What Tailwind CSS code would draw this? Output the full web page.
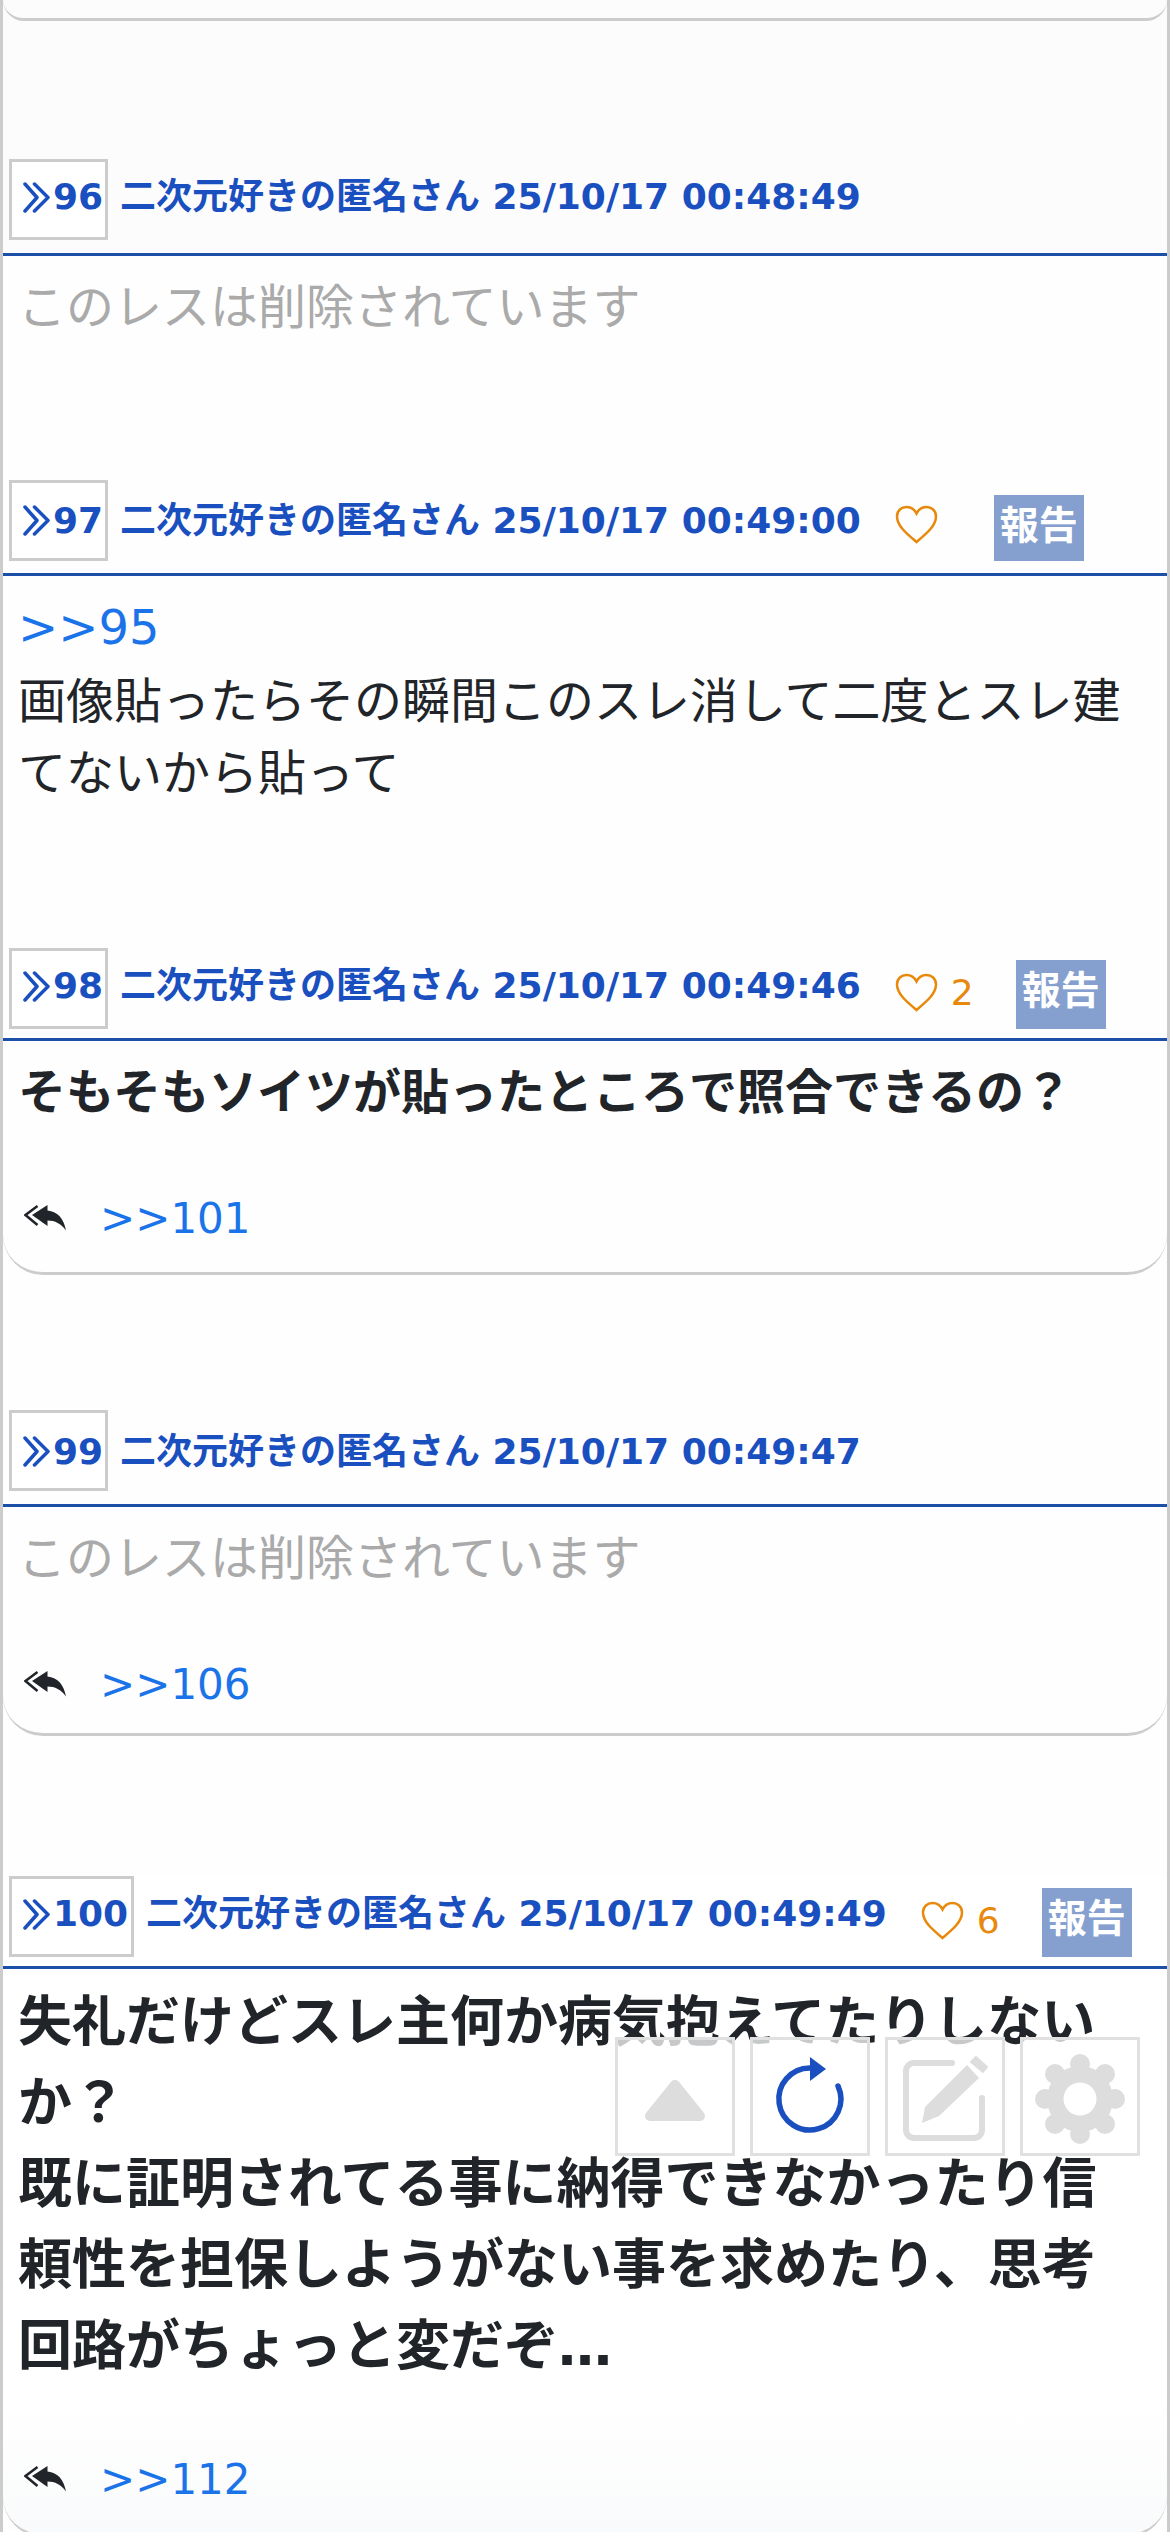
<!DOCTYPE html>
<html lang="ja">
<head>
  <meta charset="UTF-8" />
  <meta name="viewport" content="width=device-width, initial-scale=1" />
  <title>二次元好きの匿名さん</title>
  <script src="https://cdn.jsdelivr.net/npm/@tailwindcss/browser@4"></script>
</head>
<body class="bg-white">
  <div class="relative w-[1170px] h-[2532px] overflow-hidden border-x-[3px] border-[#ccc] bg-[#fefefe] text-[#212529] font-['DejaVu_Sans','Noto_Sans_CJK_JP',sans-serif]">

    <!-- end of previous post + 96 -->
    <div class="bg-[#fcfcfd]">
      <div class="h-[21px] border-b-[3px] border-[#ccc] rounded-b-[40px]"></div>
      <div class="flex items-center mt-[138px] pl-[6px] pb-[13px] border-b-[3px] border-[#1c4fa8] whitespace-nowrap text-[36px] font-bold text-[#1a4fc0]">
        <span class="flex items-center h-[81px] w-[99px] pl-[11px] pb-[5px] border-[3px] border-[#ccc] bg-white">
          <svg class="w-[27px] h-[31px] mr-[3px]" viewBox="0 0 27 31" fill="none" stroke="#1a4fc0" stroke-width="3.500" stroke-linecap="round" stroke-linejoin="round"><path d="M2 2 14 15.500 2 29"/><path d="M11.500 2 25 15.500 11.500 29"/></svg>96</span>
        <span class="ml-[12px] mb-[5px]">二次元好きの匿名さん 25/10/17 00:48:49</span>
      </div>
    </div>
    <p class="pl-[15px] pr-[30px] pt-[15px] text-[48px] leading-[72px] text-[#aaa]">このレスは削除されています</p>

    <!-- 97 -->
    <div class="mt-[137px]">
      <div class="flex items-center pl-[6px] pb-[12px] border-b-[3px] border-[#1c4fa8] whitespace-nowrap text-[36px] font-bold text-[#1a4fc0]">
        <span class="flex items-center h-[81px] w-[99px] pl-[11px] border-[3px] border-[#ccc] bg-white">
          <svg class="w-[27px] h-[31px] mr-[3px]" viewBox="0 0 27 31" fill="none" stroke="#1a4fc0" stroke-width="3.500" stroke-linecap="round" stroke-linejoin="round"><path d="M2 2 14 15.500 2 29"/><path d="M11.500 2 25 15.500 11.500 29"/></svg>97</span>
        <span class="ml-[12px]">二次元好きの匿名さん 25/10/17 00:49:00</span>
        <svg class="ml-[34px] mt-[8px] w-[43px] h-[39px]" viewBox="0 0 43 39" fill="none" stroke="#e8890c" stroke-width="2.5"><path d="M21.5 37C12 29 2 21 2 11.5 2 5.5 6.5 2 11.5 2c4 0 8 2.500 10 6.500C23.500 4.500 27.500 2 31.500 2 36.500 2 41 5.500 41 11.500 41 21 31 29 21.500 37Z"/></svg>
        <span class="self-end ml-[56px] px-[6px] h-[66px] leading-[62px] text-[39px] bg-[#85a0cf] text-white">報告</span>
      </div>
      <div class="pl-[15px] pr-[30px] pt-[15px] text-[48px] leading-[72px]">
        <a class="block text-[#1a73e8]">&gt;&gt;95</a>
        <p class="mt-[2px]">画像貼ったらその瞬間このスレ消して二度とスレ建てないから貼って</p>
      </div>
    </div>

    <!-- 98 -->
    <div class="mt-[139px] border-b-[3px] border-[#ccc] rounded-b-[40px] pb-[24px]">
      <div class="flex items-center pl-[6px] pb-[9px] border-b-[3px] border-[#1c4fa8] whitespace-nowrap text-[36px] font-bold text-[#1a4fc0]">
        <span class="flex items-center h-[81px] w-[99px] pl-[11px] pb-[5px] border-[3px] border-[#ccc] bg-white">
          <svg class="w-[27px] h-[31px] mr-[3px]" viewBox="0 0 27 31" fill="none" stroke="#1a4fc0" stroke-width="3.500" stroke-linecap="round" stroke-linejoin="round"><path d="M2 2 14 15.500 2 29"/><path d="M11.500 2 25 15.500 11.500 29"/></svg>98</span>
        <span class="ml-[12px] mb-[5px]">二次元好きの匿名さん 25/10/17 00:49:46</span>
        <svg class="ml-[34px] mt-[8px] w-[43px] h-[39px]" viewBox="0 0 43 39" fill="none" stroke="#e8890c" stroke-width="2.5"><path d="M21.5 37C12 29 2 21 2 11.5 2 5.5 6.5 2 11.5 2c4 0 8 2.500 10 6.500C23.500 4.500 27.500 2 31.500 2 36.500 2 41 5.500 41 11.500 41 21 31 29 21.500 37Z"/></svg>
        <span class="ml-[13px] mt-[8px] font-normal text-[#e8890c]">2</span>
        <span class="self-end ml-[42px] px-[6px] h-[69px] leading-[62px] text-[39px] bg-[#85a0cf] text-white">報告</span>
      </div>
      <p class="pl-[15px] pr-[30px] pt-[15px] text-[48px] leading-[72px] font-bold">そもそもソイツが貼ったところで照合できるの？</p>
      <div class="flex items-center h-[60px] mt-[60px] pl-[21px] text-[42px]">
        <svg class="w-[42px] h-[26px]" viewBox="0 0 42 26"><path d="M13.500 1 1.500 10l12 10" fill="none" stroke="#212529" stroke-width="2.500"/><path d="M8 10 23.500 0v5.500C34 6.500 40 14 42 25.500 37 18.500 31 15.500 23.500 15.500V21Z" fill="#212529"/></svg>
        <a class="ml-[34px] text-[#1a73e8]">&gt;&gt;101</a>
      </div>
    </div>

    <!-- 99 -->
    <div class="mt-[135px] border-b-[3px] border-[#ccc] rounded-b-[40px] pb-[19px]">
      <div class="flex items-center pl-[6px] pb-[13px] border-b-[3px] border-[#1c4fa8] whitespace-nowrap text-[36px] font-bold text-[#1a4fc0]">
        <span class="flex items-center h-[81px] w-[99px] pl-[11px] pt-[2px] border-[3px] border-[#ccc] bg-white">
          <svg class="w-[27px] h-[31px] mr-[3px]" viewBox="0 0 27 31" fill="none" stroke="#1a4fc0" stroke-width="3.500" stroke-linecap="round" stroke-linejoin="round"><path d="M2 2 14 15.500 2 29"/><path d="M11.500 2 25 15.500 11.500 29"/></svg>99</span>
        <span class="ml-[12px] mt-[2px]">二次元好きの匿名さん 25/10/17 00:49:47</span>
      </div>
      <p class="pl-[15px] pr-[30px] pt-[15px] text-[48px] leading-[72px] text-[#aaa]">このレスは削除されています</p>
      <div class="flex items-center h-[60px] mt-[60px] pl-[21px] text-[42px]">
        <svg class="w-[42px] h-[26px]" viewBox="0 0 42 26"><path d="M13.500 1 1.500 10l12 10" fill="none" stroke="#212529" stroke-width="2.500"/><path d="M8 10 23.500 0v5.500C34 6.500 40 14 42 25.500 37 18.500 31 15.500 23.500 15.500V21Z" fill="#212529"/></svg>
        <a class="ml-[34px] text-[#1a73e8]">&gt;&gt;106</a>
      </div>
    </div>

    <!-- 100 -->
    <div class="mt-[140px] border-b-[3px] border-[#ccc] rounded-b-[40px] pb-[25px] bg-linear-to-b from-white from-80% to-[#f9fafb]">
      <div class="flex items-center pl-[6px] pb-[9px] border-b-[3px] border-[#1c4fa8] whitespace-nowrap text-[36px] font-bold text-[#1a4fc0]">
        <span class="flex items-center h-[81px] w-[125px] pl-[11px] pb-[5px] border-[3px] border-[#ccc] bg-white">
          <svg class="w-[27px] h-[31px] mr-[3px]" viewBox="0 0 27 31" fill="none" stroke="#1a4fc0" stroke-width="3.500" stroke-linecap="round" stroke-linejoin="round"><path d="M2 2 14 15.500 2 29"/><path d="M11.500 2 25 15.500 11.500 29"/></svg>100</span>
        <span class="ml-[12px] mb-[5px]">二次元好きの匿名さん 25/10/17 00:49:49</span>
        <svg class="ml-[34px] mt-[8px] w-[43px] h-[39px]" viewBox="0 0 43 39" fill="none" stroke="#e8890c" stroke-width="2.5"><path d="M21.5 37C12 29 2 21 2 11.5 2 5.5 6.5 2 11.5 2c4 0 8 2.500 10 6.500C23.500 4.500 27.500 2 31.500 2 36.500 2 41 5.500 41 11.500 41 21 31 29 21.500 37Z"/></svg>
        <span class="ml-[13px] mt-[8px] font-normal text-[#e8890c]">6</span>
        <span class="self-end ml-[42px] px-[6px] h-[69px] leading-[62px] text-[39px] bg-[#85a0cf] text-white">報告</span>
      </div>
      <p class="pl-[15px] pr-[30px] pt-[13px] text-[54px] leading-[81px] font-bold">失礼だけどスレ主何か病気抱えてたりしないか？<br>既に証明されてる事に納得できなかったり信頼性を担保しようがない事を求めたり、思考回路がちょっと変だぞ…</p>
      <div class="flex items-center h-[60px] mt-[62px] pl-[21px] text-[42px]">
        <svg class="w-[42px] h-[26px]" viewBox="0 0 42 26"><path d="M13.500 1 1.500 10l12 10" fill="none" stroke="#212529" stroke-width="2.500"/><path d="M8 10 23.500 0v5.500C34 6.500 40 14 42 25.500 37 18.500 31 15.500 23.500 15.500V21Z" fill="#212529"/></svg>
        <a class="ml-[34px] text-[#1a73e8]">&gt;&gt;112</a>
      </div>
    </div>

    <!-- floating buttons -->
    <div class="absolute left-[612px] top-[2037px] flex gap-[15px]">
      <button class="w-[120px] h-[119px] border-[3px] border-[#e0e0e0] bg-white/75">
        <svg class="w-full h-full" viewBox="0 0 114 113"><path d="M57 45 82 76H32Z" fill="#ddd" stroke="#ddd" stroke-width="10" stroke-linejoin="round"/></svg>
      </button>
      <button class="w-[120px] h-[119px] border-[3px] border-[#e0e0e0] bg-white/75">
        <svg class="w-full h-full" viewBox="0 0 114 113"><path d="M57 28A31 31 0 1 0 85 46" fill="none" stroke="#1a4fc0" stroke-width="5.500" stroke-linecap="round"/><path d="M57 17 73 29 57 41Z" fill="#1a4fc0"/></svg>
      </button>
      <button class="w-[120px] h-[119px] border-[3px] border-[#e0e0e0] bg-white/75">
        <svg class="w-full h-full" viewBox="0 0 114 113"><path d="M64 23H26a8 8 0 0 0-8 8v59a8 8 0 0 0 8 8h60a8 8 0 0 0 8-8V58" fill="none" stroke="#ddd" stroke-width="6" stroke-linecap="round"/><path d="M34 83 37 67 79 25 91 38 51 76Z" fill="#ddd"/><path d="M88 17 99 27 95 32 83 22Z" fill="#ddd" stroke="#ddd" stroke-width="2" stroke-linejoin="round"/></svg>
      </button>
      <button class="w-[120px] h-[119px] border-[3px] border-[#e0e0e0] bg-white/75">
        <svg class="w-full h-full" viewBox="0 0 114 113" fill="#ddd">
          <circle cx="57" cy="59" r="33"/>
          <circle cx="57" cy="24" r="10"/><circle cx="57" cy="94" r="10"/><circle cx="22" cy="59" r="10"/><circle cx="92" cy="59" r="10"/>
          <circle cx="32" cy="34" r="10"/><circle cx="82" cy="34" r="10"/><circle cx="32" cy="84" r="10"/><circle cx="82" cy="84" r="10"/>
          <circle cx="57" cy="59" r="16.500" fill="#fff"/>
        </svg>
      </button>
    </div>
  </div>
</body>
</html>
